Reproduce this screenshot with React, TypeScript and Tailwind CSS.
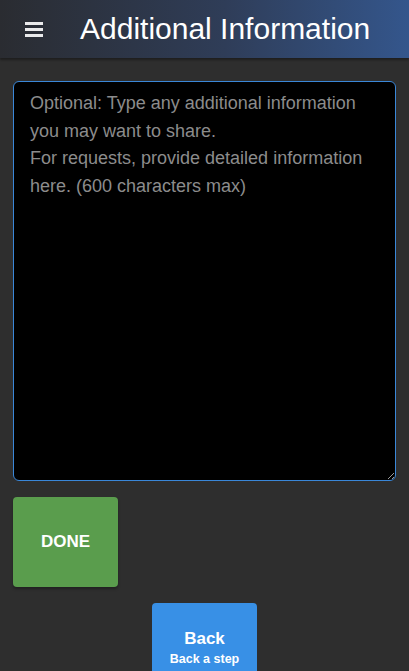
export default function App() {
  return (
    <main
      className="min-h-screen bg-[#2e2e2e] text-white"
      style={{ fontFamily: "'Liberation Sans', Arial, sans-serif" }}
    >
      <header className="flex h-[58px] items-center bg-[linear-gradient(90deg,#2a2c31_0%,#2f3d58_55%,#34568c_100%)] shadow-[0_2px_2px_rgba(0,0,0,0.35)]">
        <button className="ml-[25px] flex w-[18px] flex-col gap-[3px]" aria-label="Menu">
          <span className="h-[3px] w-full bg-white/90" />
          <span className="h-[3px] w-full bg-white/90" />
          <span className="h-[3px] w-full bg-white/90" />
        </button>
        <h1 className="ml-[37px] text-[30px] font-normal leading-none text-white">
          Additional Information
        </h1>
      </header>

      <section className="px-[13px] pt-[23px]">
        <textarea
          className="block h-[400px] w-full resize-y rounded-[6px] border border-[#3a87d8] bg-black px-[16px] py-[8px] text-[18px] leading-[27.5px] text-white outline-none placeholder:text-[#8c8c8c]"
          placeholder={"Optional: Type any additional information you may want to share.\nFor requests, provide detailed information here. (600 characters max)"}
        />

        <button className="mt-[16px] flex h-[90px] w-[105px] items-center justify-center rounded-[4px] bg-[#5a9d4d] text-[17px] font-bold text-white shadow-[0_2px_3px_rgba(0,0,0,0.3)]">
          DONE
        </button>
      </section>

      <div className="flex justify-center pt-[16px]">
        <button className="flex h-[90px] w-[105px] flex-col items-center justify-center rounded-[4px] bg-[#3890e6] text-white">
          <span className="text-[17px] font-bold leading-none">Back</span>
          <span className="mt-[6px] text-[12.5px] font-bold leading-none">Back a step</span>
        </button>
      </div>
    </main>
  );
}
